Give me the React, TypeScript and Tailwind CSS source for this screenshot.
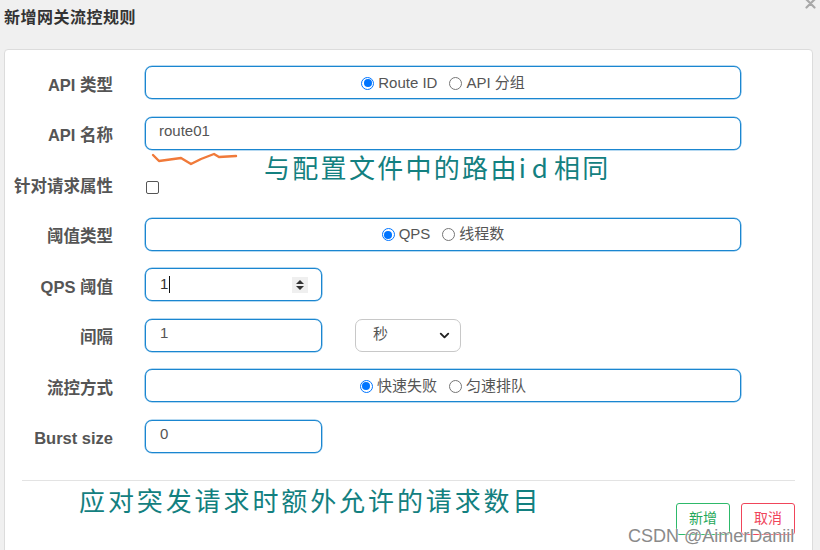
import { ChevronDown } from 'lucide-react'

const FONT = "font-['Liberation_Sans','Noto_Sans_CJK_SC',sans-serif]"
const CJK = "font-['Noto_Sans_CJK_SC','Liberation_Sans',sans-serif]"
const BOX =
  'h-[33px] rounded-[7px] border border-[#1a86d0] shadow-[0_0_0_0.6px_#6fb4e4] bg-white'

function Radio({ checked, label }: { checked?: boolean; label: string }) {
  return (
    <span className="flex items-center gap-[4px]">
      {checked ? (
        <span className="flex h-[13px] w-[13px] items-center justify-center rounded-full border-[1.5px] border-[#0075ff] bg-white">
          <span className="h-[8px] w-[8px] rounded-full bg-[#0075ff]" />
        </span>
      ) : (
        <span className="h-[13px] w-[13px] rounded-full border border-[#767676] bg-white" />
      )}
      <span>{label}</span>
    </span>
  )
}

function Row({ label, children }: { label: string; children: React.ReactNode }) {
  return (
    <div className="flex h-[33px] items-center">
      <div className="mt-[5px] w-[108px] shrink-0 text-right text-[16.5px] font-bold text-[#555]">{label}</div>
      <div className="ml-[32px] flex items-center">{children}</div>
    </div>
  )
}

function RadioBox({ items, active }: { items: string[]; active: number }) {
  return (
    <div className={`${BOX} flex w-[596px] items-center justify-center gap-[12px] pt-[1px] text-[15px] text-[#555]`}>
      {items.map((it, i) => (
        <Radio key={it} label={it} checked={i === active} />
      ))}
    </div>
  )
}

export default function App() {
  return (
    <div className={`${FONT} relative h-[550px] w-[820px] overflow-hidden bg-[#f0f0f0]`}>
      {/* close icon, cropped at the top edge like the original */}
      <svg className="absolute right-[4px] top-[-2px]" width="11" height="11" viewBox="0 0 11 11">
        <path d="M1.5 1.5 L9.5 9.5 M9.5 1.5 L1.5 9.5" stroke="#a8a8a8" strokeWidth="2.2" strokeLinecap="round" />
      </svg>

      <div className="px-[4px] pt-[6px] pb-[19px] text-[16px] font-bold tracking-[0.5px] text-[#333]">
        新增网关流控规则
      </div>

      <div className="relative ml-[4px] h-[540px] w-[809px] rounded-[4px] border border-[#dcdcdc] bg-white">
        <div className="flex flex-col gap-[17.5px] pt-[16px]">
          <Row label="API 类型">
            <RadioBox items={['Route ID', 'API 分组']} active={0} />
          </Row>
          <Row label="API 名称">
            <div className={`${BOX} flex w-[596px] items-center px-[13px] pb-[3px] text-[15px] text-[#555]`}>route01</div>
          </Row>
          <Row label="针对请求属性">
            <span className="mt-[7px] ml-[1px] h-[13px] w-[13px] rounded-[2px] border border-[#555] bg-white" />
          </Row>
          <Row label="阈值类型">
            <RadioBox items={['QPS', '线程数']} active={0} />
          </Row>
          <Row label="QPS 阈值">
            <div className={`${BOX} flex w-[177px] items-center justify-between pl-[14px] pr-[13px] text-[15px] text-[#333]`}>
              <span className="flex items-center">
                1<span className="ml-[1px] h-[17px] w-px bg-[#111]" />
              </span>
              <span className="flex h-[16px] w-[16px] flex-col items-center justify-center gap-[2px] bg-[#efefef]">
                <svg width="8" height="4" viewBox="0 0 8 4">
                  <path d="M0 4 L4 0 L8 4 Z" fill="#333" />
                </svg>
                <svg width="8" height="4" viewBox="0 0 8 4">
                  <path d="M0 0 L4 4 L8 0 Z" fill="#333" />
                </svg>
              </span>
            </div>
          </Row>
          <Row label="间隔">
            <div className={`${BOX} flex w-[177px] items-center px-[14px] pb-[3px] text-[15px] text-[#555]`}>1</div>
            <div className="ml-[33px] flex h-[33px] w-[106px] items-center justify-between rounded-[7px] border border-[#c8c8c8] pl-[17px] pr-[8px] text-[15px] text-[#555]">
              <span className="pb-[2px]">秒</span>
              <ChevronDown size={15} strokeWidth={3} color="#222" />
            </div>
          </Row>
          <Row label="流控方式">
            <RadioBox items={['快速失败', '匀速排队']} active={0} />
          </Row>
          <Row label="Burst size">
            <div className={`${BOX} flex w-[177px] items-center px-[14px] pb-[4px] text-[15px] text-[#555]`}>0</div>
          </Row>
        </div>

        <div className="mx-[17px] mt-[27px] flex items-start justify-between border-t border-[#e3e3e3]">
          <div className={`${CJK} ml-[57px] mt-[4px] text-[26px] leading-[30px] tracking-[2.9px] text-[#138080]`}>
            应对突发请求时额外允许的请求数目
          </div>
          <div className="mt-[22px] flex gap-[11px] text-[14px]">
            <button className="h-[32px] w-[54px] rounded-[3px] border border-[#2db96a] bg-white text-[#1fa85a]">新增</button>
            <button className="h-[32px] w-[54px] rounded-[3px] border border-[#f0455a] bg-white text-[#f0455a]">取消</button>
          </div>
        </div>

        {/* annotations drawn over the form */}
        <svg className="absolute left-[144px] top-[102px]" width="92" height="16" viewBox="0 0 92 16">
          <path
            d="M4 3 L10 9 L32 6 L42 12 L52 7 L65 2 L70 5 L87 4"
            fill="none"
            stroke="#f07a3a"
            strokeWidth="2.4"
            strokeLinejoin="round"
            strokeLinecap="round"
          />
        </svg>
        <div className={`${CJK} absolute left-[259px] top-[102px] text-[26px] leading-[30px] tracking-[2.3px] text-[#138080]`}>
          与配置文件中的路由<span className="tracking-[6px]">id</span>相同
        </div>
      </div>

      <div className="absolute left-[628px] top-[523px] text-[18px] text-[#8a8a8a] [text-shadow:0_0_2px_#fff,0_0_1px_#fff]">
        CSDN @AimerDaniil
      </div>
    </div>
  )
}
